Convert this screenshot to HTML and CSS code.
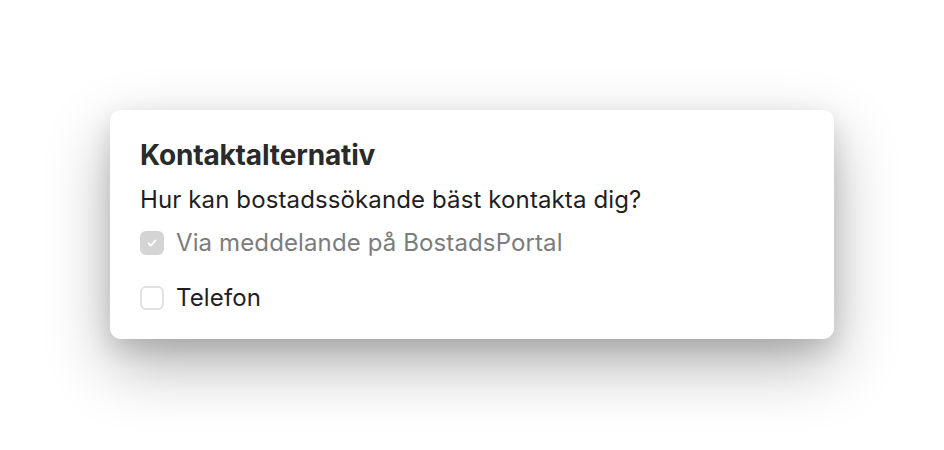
FILE: index.html
```html
<!DOCTYPE html>
<html lang="sv">
<head>
<meta charset="utf-8">
<link rel="stylesheet" href="styles.css">
</head>
<body>
<div class="page">
  <section class="card">
    <h2 class="title">Kontaktalternativ</h2>
    <p class="question">Hur kan bostadssökande bäst kontakta dig?</p>
    <label class="option disabled">
      <span class="box checked">
        <svg viewBox="0 0 24 24" width="14" height="14"><path d="M6 12.5l4 4 8-9" fill="none" stroke="#fff" stroke-width="3" stroke-linecap="round" stroke-linejoin="round"/></svg>
      </span>
      <span class="label">Via meddelande på BostadsPortal</span>
    </label>
    <label class="option">
      <span class="box"></span>
      <span class="label">Telefon</span>
    </label>
  </section>
</div>
</body>
</html>
```
FILE: styles.css
```css
html, body {
  margin: 0;
  padding: 0;
  background: #ffffff;
}
.page {
  box-sizing: border-box;
  min-height: 450px;
  padding: 110px 0 0 110px;
}
.card {
  width: 724px;
  box-sizing: border-box;
  height: 229px;
  padding: 28px 30px 0;
  background: #fff;
  border-radius: 11px;
  box-shadow: 0 26px 64px rgba(0,0,0,0.30), 0 10px 24px rgba(0,0,0,0.12);
  font-family: Inter, "Noto Sans", sans-serif;
  color: #1f1f1f;
}
.title {
  margin: 0;
  font-size: 28px;
  font-weight: 700;
  line-height: 34px;
  letter-spacing: -0.15px;
  color: #2a2a2a;
}
.question {
  margin: 12px 0 0;
  font-size: 24px;
  line-height: 32px;
  letter-spacing: 0.12px;
}
.option {
  display: flex;
  align-items: center;
  gap: 12px;
  font-size: 24px;
  line-height: 32px;
  margin-top: 11px;
  letter-spacing: 0.12px;
}
.option + .option {
  margin-top: 23px;
}
.option.disabled {
  color: #7c7c7c;
}
.box {
  width: 24px;
  height: 24px;
  box-sizing: border-box;
  border: 2px solid #e2e2e2;
  border-radius: 6px;
  display: flex;
  align-items: center;
  justify-content: center;
  flex: none;
}
.box.checked {
  background: #d4d4d4;
  border-color: #d4d4d4;
}
```
